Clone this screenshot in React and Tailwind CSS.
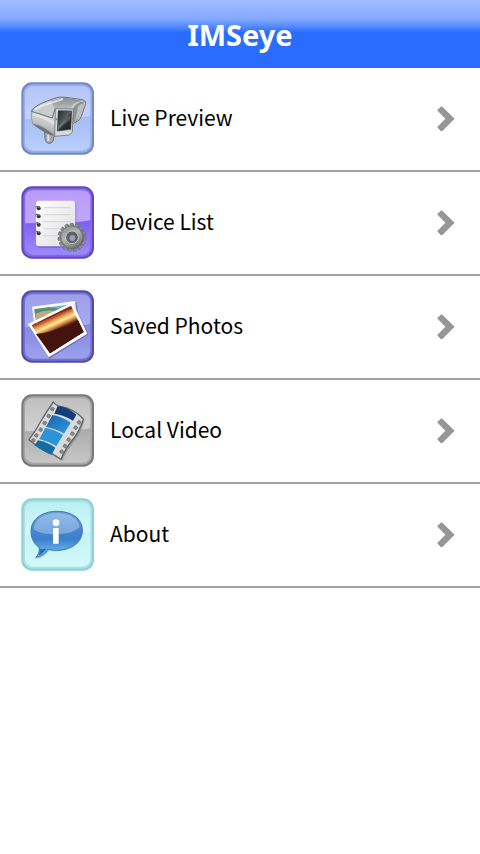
import React from 'react';

const Tile = ({ id, label, edge, top, bottom, base, children }) => (
  <svg viewBox="18 18 222 222" className="w-[74px] h-[74px] flex-shrink-0" aria-label={label} role="img">
    <defs>
      <linearGradient id={`${id}-top`} x1="0" y1="0" x2="0" y2="1">
        <stop offset="0" stopColor={top[0]} />
        <stop offset="1" stopColor={top[1]} />
      </linearGradient>
      <linearGradient id={`${id}-bottom`} x1="0" y1="0" x2="0" y2="1">
        <stop offset="0" stopColor={bottom[0]} />
        <stop offset="1" stopColor={bottom[1]} />
      </linearGradient>
    </defs>
    <rect x="22" y="19" width="218" height="217" rx="32" fill={edge} />
    <rect x="28" y="25" width="206" height="205" rx="27" fill={base} />
    <path d="M33 131V56q0-25 25-25h146q25 0 25 25v65q-50 10-196 10z" fill={`url(#${id}-top)`} />
    <path d="M33 130h125q48-1 71-9v78q0 25-25 25H58q-25 0-25-25z" fill={`url(#${id}-bottom)`} />
    {children}
  </svg>
);

const CameraIcon = () => (
  <Tile
    id="camera"
    label="Camera"
    edge="#7388cc"
    base="#98aeec"
    top={['#b4c5f8', '#c4d3fb']}
    bottom={['#a5bcf5', '#b9cffb']}
  >
    <defs>
      <linearGradient id="cam-body" x1="0.3" y1="0" x2="0" y2="1">
        <stop offset="0" stopColor="#d9dcdd" />
        <stop offset="0.5" stopColor="#c3c7c8" />
        <stop offset="1" stopColor="#7c8184" />
      </linearGradient>
      <linearGradient id="cam-hood" x1="0" y1="0" x2="0" y2="1">
        <stop offset="0" stopColor="#8b9193" />
        <stop offset="1" stopColor="#b9bec0" />
      </linearGradient>
      <linearGradient id="cam-lens" x1="0" y1="0" x2="1" y2="1">
        <stop offset="0" stopColor="#23282a" />
        <stop offset="0.5" stopColor="#596063" />
        <stop offset="0.55" stopColor="#303638" />
        <stop offset="1" stopColor="#171b1c" />
      </linearGradient>
    </defs>
    <path d="M92 168l1 20q2 14 13 14t13-14l3-16z" fill="#a3a7a9" stroke="#70757a" strokeWidth="3" />
    <path d="M103 176v19" stroke="#e2e4e5" strokeWidth="6" />
    <path d="M54 100q-5 22 2 44 26 16 50 30l22 7 12-74-20-18z" fill="url(#cam-body)" stroke="#7f8487" strokeWidth="2" />
    <path d="M57 143q30 6 68 37l-20-5q-32-15-48-32z" fill="#6f7477" />
    <path d="M58 114q32 8 64 29" fill="none" stroke="#edeeef" strokeWidth="9" opacity="0.7" />
    <path d="M52 106q9-15 28-23l38-15q18-7 38-4l48 7q12 2 11 12l-13 38q-4 12-13 16l-14 6 2-43-54-2-8 28z" fill="#c8cccd" stroke="#6a7073" strokeWidth="3" />
    <path d="M111 74q26-10 50-8l48 8q-22 2-31 11l-11 14-43 3z" fill="url(#cam-hood)" />
    <path d="M177 99q8-20 35-23l-9 28-11 28-16 8z" fill="#8b9194" />
    <path d="M192 92q9-9 18-11l-14 44-13 9z" fill="#b9bec0" />
    <path d="M62 101q20-13 47-20l38-12" fill="none" stroke="#eceeee" strokeWidth="6" opacity="0.8" />
    <path d="M124 98l54 1-3 68-8 10-45 4z" fill="#d7dadb" stroke="#7c8285" strokeWidth="3" />
    <path d="M133 104l40 1-3 55-40 5z" fill="url(#cam-lens)" stroke="#333839" strokeWidth="2" />
    <path d="M131 152l39-36-1 15-38 29z" fill="#858b8d" opacity="0.45" />
    <g fill="#858a8d">
      <circle cx="127" cy="130" r="3" />
      <circle cx="176" cy="128" r="3" />
    </g>
  </Tile>
);

const GEAR_ANGLES = [0, 24, 48, 72, 96, 120, 144, 168, 192, 216, 240, 264, 288, 312, 336];

const DeviceIcon = () => (
  <Tile
    id="device"
    label="Notebook"
    edge="#5f49be"
    base="#8468ea"
    top={['#b99cf8', '#c0a6fd']}
    bottom={['#7b5ff0', '#9d8afb']}
  >
    <defs>
      <linearGradient id="paper" x1="0" y1="0" x2="1" y2="1">
        <stop offset="0" stopColor="#ffffff" />
        <stop offset="1" stopColor="#dddddf" />
      </linearGradient>
      <linearGradient id="gear" x1="0" y1="0" x2="1" y2="1">
        <stop offset="0" stopColor="#a5a7a9" />
        <stop offset="1" stopColor="#5b5d60" />
      </linearGradient>
      <linearGradient id="gear-ring" x1="0" y1="0" x2="0.6" y2="1">
        <stop offset="0" stopColor="#8a8c8e" />
        <stop offset="0.5" stopColor="#b4b6b8" />
        <stop offset="1" stopColor="#77797c" />
      </linearGradient>
    </defs>
    <rect x="69" y="65" width="118" height="138" rx="9" fill="#5540a5" opacity="0.45" />
    <rect x="66" y="62" width="118" height="137" rx="9" fill="url(#paper)" />
    <g stroke="#d4d3d7" strokeWidth="3">
      <path d="M89 83h82M89 104h82M89 125h82M89 146h48M89 167h42" />
    </g>
    {[85, 109, 134, 160].map((y) => (
      <g key={y}>
        <circle cx="74" cy={y} r="6" fill="#2f2f36" />
        <path d={`M64 ${y - 3}q6-7 12 2`} fill="none" stroke="#737078" strokeWidth="4" />
      </g>
    ))}
    <g fill="url(#gear)" stroke="#66686b" strokeWidth="2">
      {GEAR_ANGLES.map((angle) => (
        <rect key={angle} x="168" y="130" width="11" height="18" rx="3" transform={`rotate(${angle} 174 172)`} />
      ))}
      <circle cx="174" cy="172" r="35" />
    </g>
    <circle cx="174" cy="172" r="31" fill="url(#gear-ring)" />
    <circle cx="174" cy="172" r="19" fill="#606265" stroke="#c5c7c9" strokeWidth="3" />
    <circle cx="175" cy="174" r="11" fill="#a29bb8" stroke="#505256" strokeWidth="3" />
  </Tile>
);

const PhotosIcon = () => (
  <Tile
    id="photos"
    label="Photos"
    edge="#514caa"
    base="#7472d0"
    top={['#9ca0ea', '#a8abf1']}
    bottom={['#8587df', '#9ba0ee']}
  >
    <defs>
      <linearGradient id="sunset" gradientUnits="userSpaceOnUse" x1="106" y1="88" x2="150" y2="184">
        <stop offset="0" stopColor="#6e1418" />
        <stop offset="0.12" stopColor="#a33a22" />
        <stop offset="0.24" stopColor="#eaa552" />
        <stop offset="0.33" stopColor="#ffec9c" />
        <stop offset="0.42" stopColor="#d98d40" />
        <stop offset="0.52" stopColor="#5c1c12" />
        <stop offset="1" stopColor="#351013" />
      </linearGradient>
    </defs>
    <path d="M55 66l130-16 10 69-131 17z" fill="#393587" opacity="0.35" transform="translate(3 4)" />
    <path d="M54 68l129-17 9 69-129 18z" fill="#f8f8f6" />
    <path d="M61 76l116-16 8 57-117 14z" fill="#6db8b9" />
    <path d="M61 76l44-6q20 1 34 6l-19 10-56 14z" fill="#529074" />
    <path d="M64 89q29-13 62-8l-30 16-29 9z" fill="#c3aa80" />
    <path d="M164 62l13-2 8 50-14 3z" fill="#3daad6" />
    <path d="M45 122L177 56l44 92-117 73z" fill="#2c286d" opacity="0.4" transform="translate(2 3)" />
    <path d="M42 120L176 55l44 94-116 71z" fill="#fffefa" />
    <path d="M53 124L171 66l38 78-101 64z" fill="url(#sunset)" />
    <path d="M66 150q22-2 45-8 24-12 45-14 20-8 37-18l16 34-101 64z" fill="#43140f" />
    <path d="M57 122l50-25 64-31 4 8q-30 5-58 22-30 16-58 23z" fill="#7c1f1b" opacity="0.7" />
  </Tile>
);

const FILM_HOLES = [
  [115, 63, 195, 103],
  [104, 84, 185, 119],
  [92, 105, 175, 137],
  [80, 125, 164, 155],
  [67, 142, 153, 174],
  [58, 157, 143, 191],
];

const VideoIcon = () => (
  <Tile
    id="video"
    label="Film strip"
    edge="#797979"
    base="#a6a6a6"
    top={['#c0c0c0', '#d1d1d1']}
    bottom={['#ababab', '#c6c6c6']}
  >
    <defs>
      <linearGradient id="frame" x1="0" y1="0" x2="1" y2="1">
        <stop offset="0" stopColor="#1c5fb0" />
        <stop offset="1" stopColor="#2f9be0" />
      </linearGradient>
    </defs>
    <path d="M119 44q7 11 24 14 36 6 66 37-9 31-28 57-27 33-39 64l-27-17q-32-11-69-42 20-26 36-56 21-35 37-57z" fill="#777" opacity="0.5" transform="translate(3 3)" />
    <path d="M118 42q7 11 24 14 37 6 66 37-9 31-28 57-27 33-39 64l-27-17q-32-11-69-42 20-26 36-56 21-35 37-57z" fill="#d9dadb" stroke="#63676a" strokeWidth="4" />
    <path d="M131 54q30 2 56 26l-10 18q-26-17-56-21z" fill="#123f7c" />
    <path d="M115 81q30 5 55 23l-20 33q-25-15-54-20z" fill="url(#frame)" />
    <path d="M94 120q29 5 53 21l-20 33q-24-14-51-21z" fill="#2b93d8" />
    <path d="M72 157q28 5 52 22l-12 22q-22-9-51-29z" fill="#146da2" />
    <g fill="#8c8786" stroke="#6f7173" strokeWidth="2">
      {FILM_HOLES.map(([lx, ly, rx, ry]) => (
        <g key={lx}>
          <rect x="-5" y="-5" width="10" height="10" rx="3" transform={`translate(${lx} ${ly}) rotate(28)`} />
          <rect x="-5" y="-5" width="10" height="10" rx="3" transform={`translate(${rx} ${ry}) rotate(30)`} />
        </g>
      ))}
    </g>
  </Tile>
);

const AboutIcon = () => (
  <Tile
    id="about"
    label="Information"
    edge="#8ecfd7"
    base="#a8e2e7"
    top={['#bdeff1', '#d4f9fa']}
    bottom={['#c6f3f5', '#d0f9fa']}
  >
    <defs>
      <linearGradient id="bubble" x1="0" y1="0" x2="0" y2="1">
        <stop offset="0" stopColor="#6ea3dc" />
        <stop offset="0.45" stopColor="#4585cf" />
        <stop offset="0.6" stopColor="#3a80cc" />
        <stop offset="1" stopColor="#7cc8f5" />
      </linearGradient>
    </defs>
    <path d="M128 61c46 0 78 22 78 57 0 34-31 58-76 60-11 0-18-1-25-2-10 13-24 22-42 25 9-8 14-18 13-31-16-12-25-29-25-49 0-37 34-60 77-60z" fill="#477da8" opacity="0.45" />
    <path d="M128 58c46 0 77 22 77 57 0 34-31 58-75 60-12 0-20-2-27-4-9 13-21 21-38 25 9-8 12-18 11-30-16-12-25-27-25-48 0-37 34-60 77-60z" fill="url(#bubble)" stroke="#3d79ba" strokeWidth="3" />
    <path d="M128 64c39 0 65 15 69 42-19 16-45 20-70 21-31 0-54-4-68-15 2-29 31-48 69-48z" fill="#dcecff" opacity="0.35" />
    <path d="M77 172q1 11-5 18 15-5 25-20z" fill="#286db4" />
    <circle cx="126" cy="92" r="10" fill="#fff" />
    <rect x="117" y="108" width="17" height="47" rx="2" fill="#fff" />
  </Tile>
);

const Chevron = () => (
  <svg viewBox="51 33 54 78" className="w-[18px] h-[26px] flex-shrink-0" aria-hidden="true">
    <path
      d="M65 36L101 71L65 107L54 97L79 71L54 46Z"
      fill="#969696"
      stroke="#969696"
      strokeWidth="4"
      strokeLinejoin="round"
    />
  </svg>
);

const menuItems = [
  { label: 'Live Preview', Icon: CameraIcon },
  { label: 'Device List', Icon: DeviceIcon },
  { label: 'Saved Photos', Icon: PhotosIcon },
  { label: 'Local Video', Icon: VideoIcon },
  { label: 'About', Icon: AboutIcon },
];

const App = () => {
  return (
    <div className="min-h-screen bg-white text-black">
      <header className="h-[68px] flex items-center justify-center pt-0.5 bg-linear-to-b from-[#a3bdff] from-0% via-[#82a9ff] via-28% to-[#296cff] to-48%">
        <h1 className="font-['Noto_Sans',sans-serif] text-[29px] leading-10 font-bold text-white">IMSeye</h1>
      </header>

      <nav>
        <ul>
          {menuItems.map(({ label, Icon }) => (
            <li key={label} className="border-b-2 border-[#a5a5a5]">
              <button type="button" className="w-full h-[102px] pl-5 pr-[25px] flex items-center gap-4 text-left cursor-pointer">
                <Icon />
                <span className="flex-1 min-w-0 pb-1 font-['Noto_Sans_CJK_SC',sans-serif] text-[21px] leading-8">{label}</span>
                <Chevron />
              </button>
            </li>
          ))}
        </ul>
      </nav>
    </div>
  );
};

export default App;
